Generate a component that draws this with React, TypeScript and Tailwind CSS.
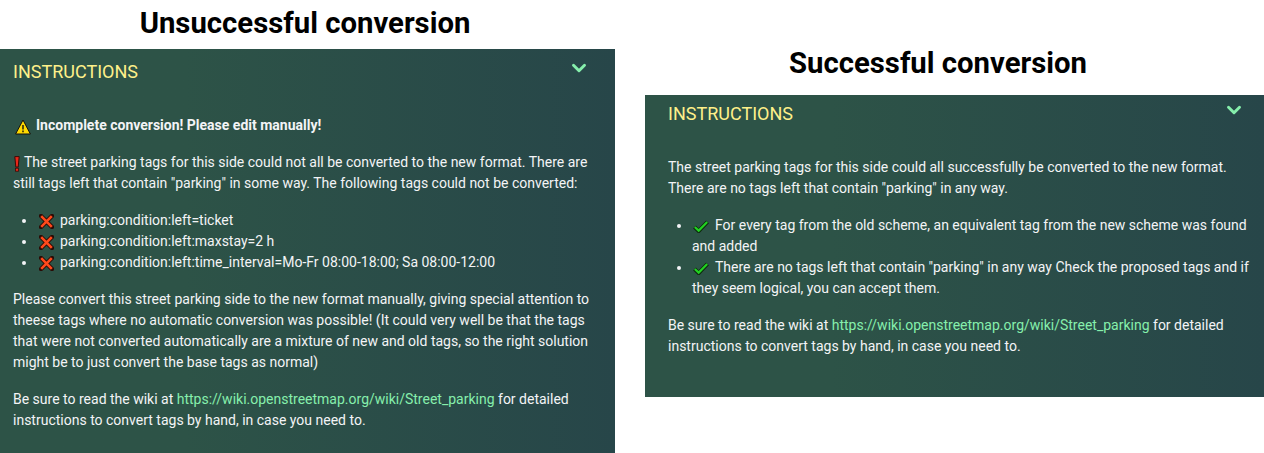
import React from 'react';
import { FiChevronDown } from 'react-icons/fi';

const WIKI = 'https://wiki.openstreetmap.org/wiki/Street_parking';

const Warning = () => (
  <svg className="inline-block w-[16px] h-[16px] mr-[5px] mb-[-2px] ml-[2px]" viewBox="0 0 16 16">
    <path d="M8 1 15.4 15H.6Z" fill="#ffd900" stroke="#111" strokeWidth="1" strokeLinejoin="round" />
    <path d="M8 6v4.5" stroke="#111" strokeWidth="1.4" />
    <path d="M8 11.6v1.7" stroke="#111" strokeWidth="1.4" />
  </svg>
);

const Bang = () => (
  <svg className="inline-block w-[6px] h-[16px] ml-[1px] mr-[4px] mb-[-1px]" viewBox="0 0 6 16">
    <path d="M.8 .6h4.4L4.2 11H1.8Z" fill="#e8281a" stroke="#3a0a06" strokeWidth="1" />
    <rect x="1.5" y="12.2" width="3" height="3" fill="#e8281a" stroke="#3a0a06" strokeWidth=".8" />
  </svg>
);

const Cross = () => (
  <svg className="inline-block w-[15px] h-[15px] ml-[2px] mr-[6px] mb-[-1px]" viewBox="0 0 15 15">
    <path d="M2 2 13 13M13 2 2 13" stroke="#2a0c06" strokeWidth="4.4" strokeLinecap="square" />
    <path d="M2.2 2.2 12.8 12.8M12.8 2.2 2.2 12.8" stroke="#ff4a1c" strokeWidth="2.6" />
  </svg>
);

const Check = () => (
  <svg className="inline-block w-[16px] h-[13px] ml-[1px] mr-[6px] mb-[-1px]" viewBox="0 0 16 13">
    <path d="M1.5 7 5.7 11 14.5 1.8" fill="none" stroke="#0c2a0c" strokeWidth="4" />
    <path d="M1.8 7 5.7 10.6 14.2 2" fill="none" stroke="#22d022" strokeWidth="2.2" />
  </svg>
);

const WikiNote = () => (
  <p>
    Be sure to read the wiki at <span className="text-[#86efac]">{WIKI}</span> for detailed
    instructions to convert tags by hand, in case you need to.
  </p>
);

const Panel: React.FC<{ className: string; headClass: string; children: React.ReactNode }> = ({
  className,
  headClass,
  children,
}) => (
  <div className={`bg-gradient-to-r from-[#2d5347] from-30% to-[#274649] text-[14px] leading-[21px] text-[#f3f4f6] ${className}`}>
    <div className={`flex justify-between ${headClass}`}>
      <span className="text-[18px] leading-[24px] text-[#fef08a]">INSTRUCTIONS</span>
      <FiChevronDown className="text-[#86efac] w-[22px] h-[22px] mt-[-3px]" strokeWidth={3.2} />
    </div>
    {children}
  </div>
);

export default function App() {
  return (
    <div className="flex items-start bg-white h-[453px] overflow-hidden font-['Roboto',sans-serif]">
      {/* Unsuccessful */}
      <div className="w-[615px] shrink-0">
        <h2 className="text-[29.3px] leading-[36px] font-bold text-black text-center mt-[5px] mb-[8px] pr-[5px]">
          Unsuccessful conversion
        </h2>
        <Panel className="h-[404px] pl-[13px] pr-[20px] pt-[11px]" headClass="pr-[5px] mb-[31px]">
          <p className="font-bold mb-[16px]">
            <Warning />
            Incomplete conversion! Please edit manually!
          </p>
          <p className="mb-[16px]">
            <Bang />
            The street parking tags for this side could not all be converted to the new format. There are
            still tags left that contain "parking" in some way. The following tags could not be converted:
          </p>
          <ul className="list-disc pl-[24px] mb-[16px]">
            <li><Cross />parking:condition:left=ticket</li>
            <li><Cross />parking:condition:left:maxstay=2 h</li>
            <li><Cross />parking:condition:left:time_interval=Mo-Fr 08:00-18:00; Sa 08:00-12:00</li>
          </ul>
          <p className="mb-[16px]">
            Please convert this street parking side to the new format manually, giving special attention to
            theese tags where no automatic conversion was possible! (It could very well be that the tags
            that were not converted automatically are a mixture of new and old tags, so the right solution
            might be to just convert the base tags as normal)
          </p>
          <WikiNote />
        </Panel>
      </div>

      {/* Successful */}
      <div className="w-[619px] shrink-0 ml-[30px] pt-[45px]">
        <h2 className="text-[29.3px] leading-[36px] font-bold text-black text-center mb-[14px] pr-[33px]">
          Successful conversion
        </h2>
        <Panel className="h-[302px] pl-[23px] pr-[14px] pt-[7px]" headClass="pr-[5px] mb-[31px]">
          <p className="mb-[16px]">
            The street parking tags for this side could all successfully be converted to the new format.
            There are no tags left that contain "parking" in any way.
          </p>
          <ul className="list-disc pl-[24px] mb-[16px]">
            <li><Check />For every tag from the old scheme, an equivalent tag from the new scheme was found and added</li>
            <li><Check />There are no tags left that contain "parking" in any way Check the proposed tags and if they seem logical, you can accept them.</li>
          </ul>
          <WikiNote />
        </Panel>
      </div>
    </div>
  );
}
